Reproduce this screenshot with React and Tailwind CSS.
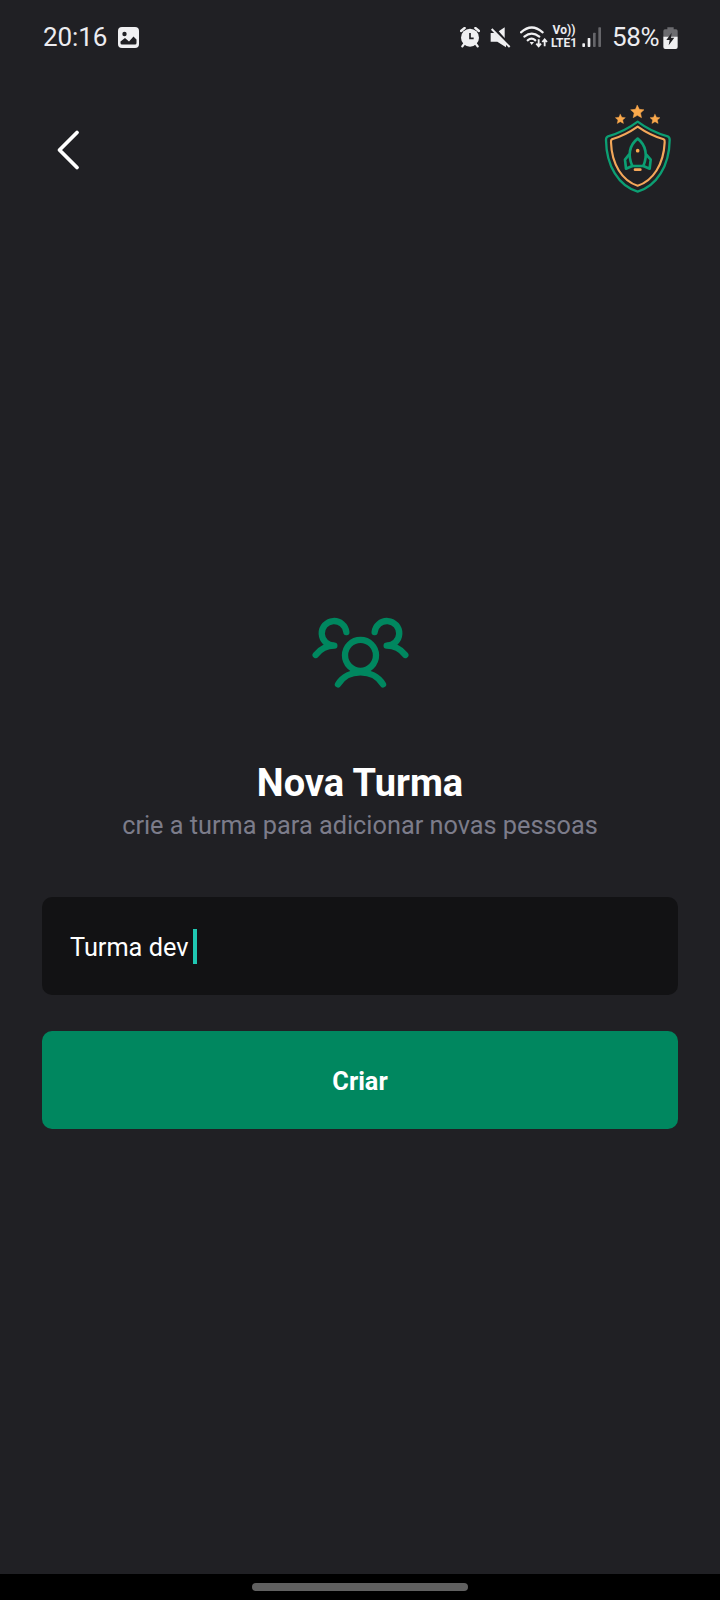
import React from "react";

const STAR = "M0 -19 L6 -7 L20 -5.500 L9.500 4 L12.500 18 L0 11 L-12.500 18 L-9.500 4 L-20 -5.500 L-6 -7 Z";

function StatusBar() {
  return (
    <header className="flex h-[74px] items-center pl-[43px] pr-[42px] text-[26px] leading-none text-[#ececf0]">
      <span className="w-[64px] whitespace-nowrap tracking-[-0.1px]">20:16</span>
      <svg className="ml-[11px] mt-px h-[21px] w-[21px]" viewBox="0 0 21 21">
        <rect width="21" height="21" rx="4" fill="#f0f0f2" />
        <circle cx="6.500" cy="7" r="2.200" fill="#202024" />
        <path d="M2.500 16 V14.500 L7 11 L11 14.500 L15.500 9.500 L18.500 12.500 V16 Q18.500 17.500 17 17.500 H4 Q2.500 17.500 2.500 16 Z" fill="#202024" />
      </svg>
      <div className="ml-auto flex items-center">
        <svg className="h-[21px] w-[20px]" viewBox="30 38 60 63" fill="none">
          <path d="M33 50 L44 41 M87 50 L76 41" stroke="#f0f0f2" strokeWidth="7" strokeLinecap="round" />
          <path d="M43 88 L37 96 M77 88 L83 96" stroke="#f0f0f2" strokeWidth="7" strokeLinecap="round" />
          <circle cx="60" cy="70" r="27" fill="#f0f0f2" />
          <path d="M60 56 V72 H71" stroke="#202024" strokeWidth="5" />
        </svg>
        <svg className="ml-[10px] h-[21px] w-[21px]" viewBox="120 38 63 63" fill="none">
          <path d="M122 56 H134 L168 89 V99 L142 82 H122 Z" fill="#f0f0f2" />
          <path d="M146 51 L164 39 V72 Z" fill="#f0f0f2" />
          <path d="M132 42 L182 93" stroke="#202024" strokeWidth="5" />
          <path d="M125 44 L179 98" stroke="#f0f0f2" strokeWidth="6" />
        </svg>
        <svg className="ml-[9px] h-[22px] w-[28px]" viewBox="208 36 84 66" fill="none" stroke="#f0f0f2">
          <path d="M211 55 Q243 26 276 55" strokeWidth="6.500" strokeLinecap="round" />
          <path d="M221 68 Q243 50 266 68" strokeWidth="6.500" strokeLinecap="round" />
          <path d="M231 79 Q243 69 254 79" strokeWidth="6.500" strokeLinecap="round" />
          <path d="M237 84 H250 L243 93 Z" fill="#f0f0f2" stroke="none" />
          <path d="M264 76 V96 M257 89 L264 97 L271 89" strokeWidth="5.500" />
          <path d="M282 97 V77 M275 84 L282 76 L289 84" strokeWidth="5.500" />
        </svg>
        <div className="ml-[3px] flex w-[26px] flex-col items-center whitespace-nowrap text-[12px] font-bold leading-[13px]">
          <span>Vo))</span>
          <span>LTE1</span>
        </div>
        <svg className="ml-[5px] h-[21px] w-[20px]" viewBox="36 38 60 63">
          <rect x="37" y="87" width="8" height="11" rx="2" fill="#f0f0f2" />
          <rect x="53" y="71" width="8" height="27" rx="2" fill="#f0f0f2" />
          <rect x="69" y="55" width="8" height="43" rx="2" fill="#66666a" />
          <rect x="85" y="39" width="8" height="59" rx="2" fill="#66666a" />
        </svg>
        <span className="ml-[10px] w-[47px] whitespace-nowrap tracking-[-0.3px]">58%</span>
        <svg className="ml-[4px] mt-px h-[22px] w-[15px]" viewBox="279 36 45 66">
          <path d="M292 37 H311 V43 H318 Q323 43 323 48 V66 H280 V48 Q280 43 285 43 H292 Z" fill="#6b6b6f" />
          <path d="M280 65 H323 V96 Q323 102 317 102 H286 Q280 102 280 96 Z" fill="#f0f0f2" />
          <path d="M305 53 L289 75 H299 L296 91 L313 68 H303 Z" fill="#202024" />
        </svg>
      </div>
    </header>
  );
}

function BackIcon() {
  return (
    <svg className="h-[44px] w-[28px]" viewBox="0 0 28 44" fill="none" stroke="#fff" strokeWidth="3.800" strokeLinecap="round" strokeLinejoin="round">
      <path d="M23 4.500 L5.500 22 L23 39.500" />
    </svg>
  );
}

function Crest() {
  return (
    <svg className="h-[95px] w-[75px]" viewBox="30 15 225 285" fill="none" strokeLinejoin="round" strokeLinecap="round">
      <g fill="#fba94c" stroke="#fba94c" strokeWidth="1.500">
        <path d={STAR} transform="translate(142 50)" />
        <path d={STAR} transform="translate(91 72) scale(.75)" />
        <path d={STAR} transform="translate(195 72) scale(.75)" />
      </g>
      <path d="M143 80 Q102 111 54 124 Q48 126 48 135 C49 213 86 273 143 290 C200 273 238 213 239 135 Q239 126 233 124 Q184 111 143 80 Z" stroke="#0c9f73" strokeWidth="7" />
      <path d="M143 95 Q106 121 66 133 Q62 135 63 142 C65 208 97 258 143 272 C189 258 221 208 224 142 Q225 135 221 133 Q180 121 143 95 Z" stroke="#f4a75a" strokeWidth="6.500" />
      <g stroke="#0c9f73" strokeWidth="8">
        <path d="M143 131 C117 151 113 183 127 213 H160 C173 183 169 151 143 131 Z" />
        <path d="M117 179 L105 194 L108 221 L127 213 M169 179 L182 194 L179 221 L160 213" />
      </g>
      <circle cx="143" cy="167" r="5.500" fill="#fba94c" />
      <path d="M135 224 H151" stroke="#f4a75a" strokeWidth="8" />
    </svg>
  );
}

function PeopleIcon() {
  return (
    <svg className="h-[75px] w-[100px]" viewBox="30 30 300 225" fill="none" stroke="#00875f" strokeWidth="19" strokeLinecap="round" strokeLinejoin="round">
      <circle cx="181.500" cy="151" r="46.500" />
      <path d="M114 238 C143 190 220 190 249 238" />
      <path d="M139 81 A37 37 0 1 0 103 122 C78 122 61 132 47 150" />
      <path d="M224 81 A37 37 0 1 1 260 122 C285 122 302 132 316 150" />
    </svg>
  );
}

export default function App() {
  return (
    <div className="flex h-[1600px] w-[720px] flex-col bg-[#202024] font-['Roboto',sans-serif]">
      <StatusBar />
      <div className="flex items-center justify-between pl-[54px] pr-[45px] pt-[26px]">
        <button aria-label="Voltar" className="mt-[5px]">
          <BackIcon />
        </button>
        <Crest />
      </div>
      <main className="flex flex-1 flex-col items-center px-[42px] pt-[420px]">
        <PeopleIcon />
        <h1 className="mt-[69px] whitespace-nowrap text-[38px] font-bold leading-[48px] text-white">Nova Turma</h1>
        <p className="mt-[3px] whitespace-nowrap text-[25.300px] leading-[32px] text-[#7c7c8a]">crie a turma para adicionar novas pessoas</p>
        <div className="mt-[55px] flex h-[98px] w-full items-center rounded-[10px] bg-[#121214] pl-[28px] text-[25.300px] text-white">
          <span className="whitespace-nowrap pt-[4px]">Turma dev</span>
          <span className="ml-[5px] h-[35px] w-[4px] bg-[#1fc7b2]" />
        </div>
        <button className="mt-[36px] h-[98px] w-full rounded-[10px] bg-[#00875f] pt-[4px] text-[25.300px] font-bold text-white">Criar</button>
      </main>
      <footer className="flex h-[26px] justify-center bg-black pt-[9px]">
        <div className="h-[8px] w-[216px] rounded-full bg-[#606060]" />
      </footer>
    </div>
  );
}
